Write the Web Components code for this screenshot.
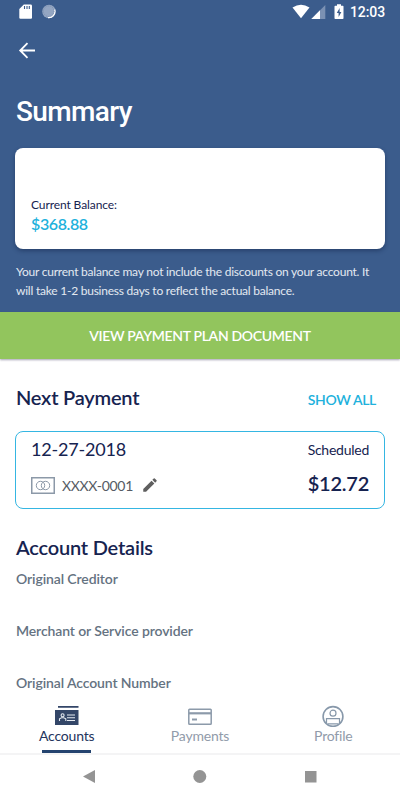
<!DOCTYPE html>
<html lang="en">
<head>
<meta charset="utf-8">
<title>Summary</title>
<style>
    html, body {
        margin: 0;
        height: 800px;
        overflow: hidden;
        background: #fff;
        font-family: Lato, sans-serif;
        color: #162350;
    }
</style>
</head>
<body>
<account-screen></account-screen>
<script>
// Attaches an open shadow root and fills it with the given markup
function render(element, html) {
    element.attachShadow({mode: 'open'});
    element.shadowRoot.innerHTML = html;
}

class StatusBar extends HTMLElement {
    constructor() {
        super();
        render(this, `
            <style>
                :host {
                    display: flex;
                    align-items: center;
                    height: 24px;
                    padding: 0 15px 0 19px;
                    color: #fff;
                    font: 500 14px/24px Roboto, sans-serif;
                    letter-spacing: -.1px;
                }
                svg { display: block; flex: none; }
                .space { flex: 1; }
                .disc { margin-left: 10px; }
                .battery { margin: 0 6px 0 8px; }
            </style>
            <svg width="13" height="16" viewBox="0 0 13 16"><path d="M4.8 .5H11.6Q13 .5 13 1.8V13.5Q13 14.8 12 14.8H1.4Q.3 14.8 .3 13.5V5Z" fill="#fff"/><path d="M5.5 2v3M8 2v3M10.3 2v3" stroke="#3b5c8c" stroke-width="1.1"/></svg>
            <svg class="disc" width="14" height="16" viewBox="0 0 14 16"><circle cx="7" cy="7.5" r="6.8" fill="#94a6c2"/><path d="M12.6 5.5A6.2 6.2 0 0 1 6 13.6" fill="none" stroke="#fff" stroke-width="1.2"/><circle cx="6.7" cy="7.2" r="5.3" fill="none" stroke="#7187ab" stroke-width=".7" stroke-dasharray="1 1"/></svg>
            <span class="space"></span>
            <svg width="18" height="16" viewBox="0 0 18 16"><path d="M.5 3.5Q9-1.8 17.5 3.5L9 14.2Z" fill="#fff"/></svg>
            <svg width="16" height="16" viewBox="0 0 16 16"><path d="M15.3 1V15H1.3Z" fill="#7b91b3"/><path d="M10 6.3V15H1.3Z" fill="#fff"/></svg>
            <svg class="battery" width="10" height="16" viewBox="0 0 10 16"><path d="M3 .2h4v1.5h1.8q.7 0 .7.8v11.7q0 .8-.8.8H1.2q-.7 0-.7-.8V2.5q0-.8.8-.8H3Z" fill="#fff"/><path d="M5.6 4L2.8 9h1.8v4L7.4 8H5.6Z" fill="#3b5c8c"/></svg>
            <slot></slot>
        `);
    }
}

class SummaryHeader extends HTMLElement {
    constructor() {
        super();
        render(this, `
            <style>
                :host {
                    display: flex;
                    flex-direction: column;
                    height: 312px;
                    background: #3b5c8c;
                    color: #fff;
                }
                .back { display: block; margin: 14px 0 0 15px; }
                h1 {
                    margin: 30px 16px 17px;
                    font: 500 28px/39px Roboto, sans-serif;
                    letter-spacing: -.65px;
                }
                p {
                    margin: 13px 16px 0;
                    font-size: 12px;
                    line-height: 19px;
                    letter-spacing: -.23px;
                    color: #e3e9f1;
                    white-space: nowrap;
                }
            </style>
            <status-bar>12:03</status-bar>
            <svg class="back" width="24" height="24" viewBox="0 0 24 24"><path d="M20 12.5H5.5M12.5 5.2L5.2 12.5L12.5 19.8" fill="none" stroke="#fff" stroke-width="1.8"/></svg>
            <h1><slot name="title"></slot></h1>
            <slot name="balance"></slot>
            <p><slot></slot></p>
        `);
    }
}

class BalanceCard extends HTMLElement {
    constructor() {
        super();
        render(this, `
            <style>
                :host {
                    display: flex;
                    flex-direction: column;
                    justify-content: flex-end;
                    box-sizing: border-box;
                    height: 101px;
                    margin: 0 15px;
                    padding: 0 16px 14px;
                    border-radius: 8px;
                    background: #fff;
                    box-shadow: 0 2px 4px rgba(10, 25, 60, .4);
                    color: #162350;
                }
                .label { font-size: 12px; line-height: 16px; letter-spacing: -.1px; }
                .amount { font-size: 16px; line-height: 22px; font-weight: 600; letter-spacing: -.4px; color: #21b1dc; }
            </style>
            <span class="label"><slot></slot></span>
            <span class="amount"><slot name="amount"></slot></span>
        `);
    }
}

class WideButton extends HTMLElement {
    constructor() {
        super();
        render(this, `
            <style>
                :host {
                    display: block;
                    height: 47px;
                    background: #92c55d;
                    box-shadow: 0 1px 2px rgba(60, 50, 90, .45);
                    color: #fff;
                    font-size: 14px;
                    font-weight: 600;
                    line-height: 47px;
                    letter-spacing: -.32px;
                    text-align: center;
                }
            </style>
            <slot></slot>
        `);
    }
}

class PaymentCard extends HTMLElement {
    constructor() {
        super();
        render(this, `
            <style>
                :host {
                    display: grid;
                    grid-template-columns: 1fr auto;
                    grid-template-rows: 33px 36px;
                    align-items: center;
                    box-sizing: border-box;
                    height: 78px;
                    padding: 0 15px;
                    border: 1px solid #35b6e2;
                    border-radius: 8px;
                }
                .date { font-size: 18px; letter-spacing: -.2px; }
                .status { font-size: 14px; letter-spacing: -.25px; text-align: right; padding-top: 2px; }
                .method { display: flex; align-items: center; color: #555b64; font-size: 14px; letter-spacing: -.3px; padding-top: 4px; }
                .method svg { flex: none; }
                .number { margin: 0 8px 0 7px; }
                .amount { font-size: 20px; font-weight: 600; letter-spacing: -.25px; text-align: right; }
            </style>
            <span class="date"><slot name="date"></slot></span>
            <span class="status"><slot name="status"></slot></span>
            <span class="method">
                <svg width="24" height="17" viewBox="0 0 24 17" fill="none" stroke="#8c99a8"><rect x=".75" y=".75" width="22.5" height="15.5" stroke-width="1.5"/><circle cx="9.5" cy="8.5" r="4.2"/><circle cx="14.5" cy="8.5" r="4.2"/></svg>
                <span class="number"><slot></slot></span>
                <svg width="18" height="18" viewBox="0 0 24 24" fill="#5f5f5f"><path d="M3 17.25V21h3.75L17.81 9.94l-3.75-3.75L3 17.25zM20.71 7.04a1 1 0 0 0 0-1.41l-2.34-2.34a1 1 0 0 0-1.41 0l-1.83 1.83 3.75 3.75 1.83-1.83z"/></svg>
            </span>
            <span class="amount"><slot name="amount"></slot></span>
        `);
    }
}

class AccountSection extends HTMLElement {
    constructor() {
        super();
        render(this, `
            <style>
                :host { display: block; padding: 0 15px; }
                header { display: flex; justify-content: space-between; align-items: center; height: 30px; }
                h2 { margin: 0 1px 2px; font-size: 20px; font-weight: 600; line-height: 28px; letter-spacing: -.2px; }
                ::slotted([slot="action"]) {
                    color: #21b1dc;
                    font-size: 14px;
                    font-weight: 600;
                    letter-spacing: -.35px;
                    padding: 3px 9px 0 0;
                }
            </style>
            <header><h2><slot name="heading"></slot></h2><slot name="action"></slot></header>
            <slot></slot>
        `);
    }
}

class DetailRow extends HTMLElement {
    constructor() {
        super();
        render(this, `
            <style>
                :host {
                    display: block;
                    height: 52px;
                    margin-left: 1px;
                    color: #647281;
                    font-size: 14px;
                    font-weight: 600;
                    line-height: 32px;
                    letter-spacing: -.11px;
                }
            </style>
            <slot></slot>
        `);
    }
}

class TabItem extends HTMLElement {
    constructor() {
        super();
        render(this, `
            <style>
                :host {
                    display: flex;
                    flex-direction: column;
                    align-items: center;
                    flex: 1;
                    color: #919baa;
                    font-size: 14px;
                    line-height: 18px;
                    letter-spacing: -.2px;
                }
                :host([selected]) { color: #24345d; }
                .mark { width: 49px; height: 3px; margin-top: 5px; }
                :host([selected]) .mark { background: #24436f; }
            </style>
            <slot name="icon"></slot>
            <span><slot></slot></span>
            <span class="mark"></span>
        `);
    }
}

class TabBar extends HTMLElement {
    constructor() {
        super();
        render(this, `
            <style>
                :host {
                    display: flex;
                    box-sizing: border-box;
                    height: 56px;
                    padding-top: 5px;
                    background: #fff;
                    border-bottom: 2px solid #f4f4f5;
                }
            </style>
            <slot></slot>
        `);
    }
}

class SystemNav extends HTMLElement {
    constructor() {
        super();
        render(this, `
            <style>
                :host { display: grid; grid-template-columns: 1fr 16px 1fr; height: 45px; padding-top: 13px; box-sizing: border-box; }
                svg { display: block; }
                .back { margin-left: 82px; }
                .recent { margin-left: 96px; }
            </style>
            <svg class="back" width="14" height="16"><path d="M13 2V15L1 8.5Z" fill="#949494"/></svg>
            <svg width="16" height="16"><circle cx="7.8" cy="8.5" r="6.5" fill="#949494"/></svg>
            <svg class="recent" width="14" height="16"><rect x="1" y="3" width="11.5" height="11.5" fill="#949494"/></svg>
        `);
    }
}

class AccountScreen extends HTMLElement {
    constructor() {
        super();
        render(this, `
            <style>
                :host { display: flex; flex-direction: column; height: 800px; }
                main { height: 340px; overflow: hidden; }
                account-section { padding-top: 24px; }
                payment-card { margin-top: 18px; }
                svg { display: block; }
            </style>
            <summary-header>
                <span slot="title">Summary</span>
                <balance-card slot="balance">Current Balance:<span slot="amount">$368.88</span></balance-card>
                Your current balance may not include the discounts on your account. It<br>will take 1-2 business days to reflect the actual balance.
            </summary-header>
            <wide-button>VIEW PAYMENT PLAN DOCUMENT</wide-button>
            <main>
                <account-section>
                    <span slot="heading">Next Payment</span>
                    <span slot="action">SHOW ALL</span>
                    <payment-card>
                        <span slot="date">12-27-2018</span>
                        <span slot="status">Scheduled</span>
                        XXXX-0001
                        <span slot="amount">$12.72</span>
                    </payment-card>
                </account-section>
                <account-section>
                    <span slot="heading">Account Details</span>
                    <detail-row>Original Creditor</detail-row>
                    <detail-row>Merchant or Service provider</detail-row>
                    <detail-row>Original Account Number</detail-row>
                </account-section>
            </main>
            <tab-bar>
                <tab-item selected>
                    <svg slot="icon" width="24" height="23" viewBox="0 0 24 23"><path d="M3 2h20.5v1.8H3zM0 6h23.5v15H0z" fill="#334668"/><g fill="none" stroke="#e4e9f0" stroke-width="1.1"><circle cx="7.6" cy="11.2" r="1.5"/><path d="M4.5 17v-2.2l2-1h2.3l2 1V17M12 11h8M12 13.8h8M12 16.5h8"/></g></svg>
                    Accounts
                </tab-item>
                <tab-item>
                    <svg slot="icon" width="24" height="23" viewBox="0 0 24 23" fill="none" stroke="#8c9aaa" stroke-width="1.5"><rect x=".8" y="5.3" width="22.4" height="15" rx=".8"/><path d="M1 9.3h22" stroke-width="2.2"/><path d="M4 15.5h5" stroke-width="2"/></svg>
                    Payments
                </tab-item>
                <tab-item>
                    <svg slot="icon" width="24" height="23" viewBox="0 0 24 23" fill="none" stroke="#8798aa" stroke-width="1.2"><circle cx="12" cy="12.5" r="9.9" stroke-width="1.6"/><circle cx="12" cy="9.2" r="3"/><path d="M5.5 19.5V14.6h13v4.9M6.5 19.8h11"/></svg>
                    Profile
                </tab-item>
            </tab-bar>
            <system-nav></system-nav>
        `);
    }
}

customElements.define('status-bar', StatusBar);
customElements.define('summary-header', SummaryHeader);
customElements.define('balance-card', BalanceCard);
customElements.define('wide-button', WideButton);
customElements.define('payment-card', PaymentCard);
customElements.define('account-section', AccountSection);
customElements.define('detail-row', DetailRow);
customElements.define('tab-item', TabItem);
customElements.define('tab-bar', TabBar);
customElements.define('system-nav', SystemNav);
customElements.define('account-screen', AccountScreen);
</script>
</body>
</html>
